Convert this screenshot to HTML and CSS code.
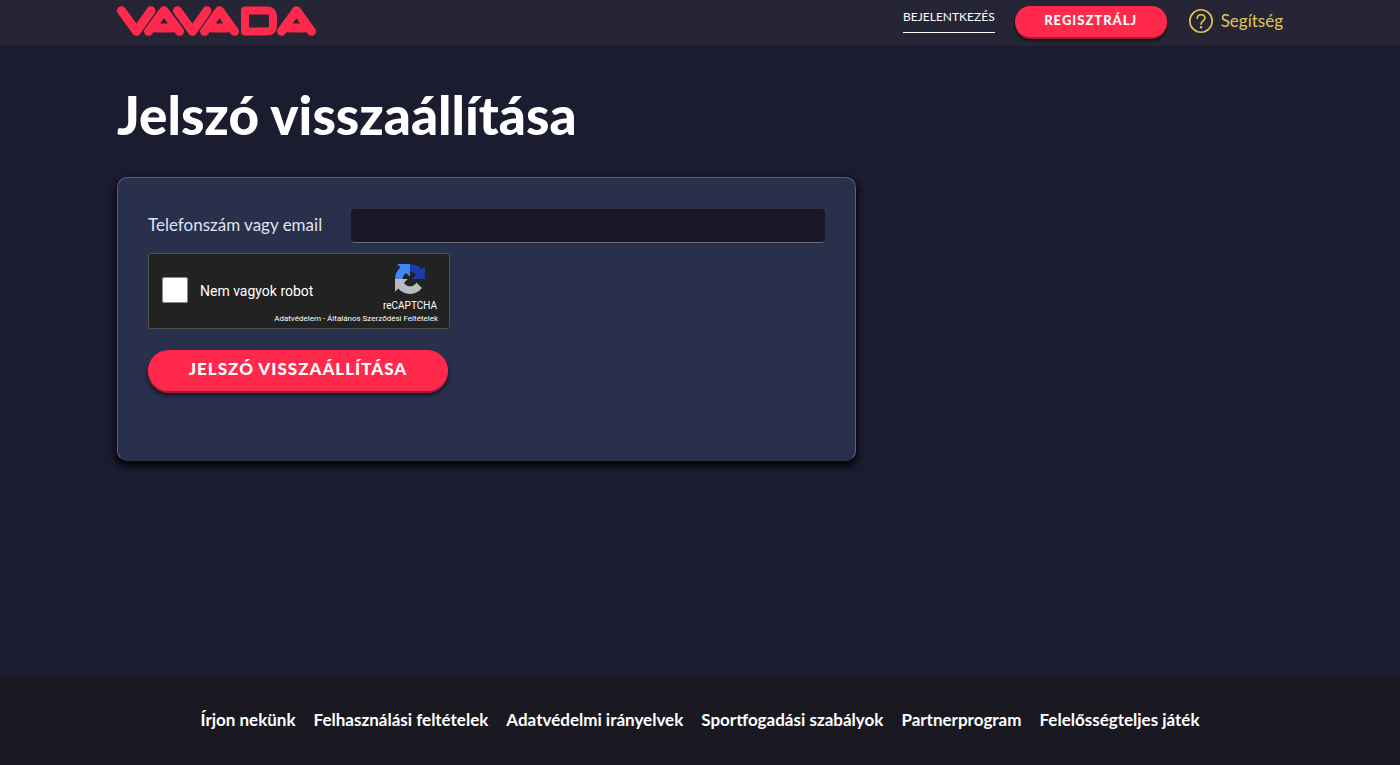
FILE: index.html
```html
<!DOCTYPE html>
<html lang="hu">
<head>
  <meta charset="UTF-8">
  <meta name="viewport" content="width=device-width, initial-scale=1.0">
  <title>Jelszó visszaállítása - Vavada</title>
  <link rel="stylesheet" href="styles.css">
</head>
<body>
  <header class="header">
    <div class="container header-inner">
      <a class="logo" href="#" aria-label="Vavada">
        <svg width="199" height="30" viewBox="0 0 199 30" fill="none" stroke-linecap="round" stroke-linejoin="round">
          <g stroke="#ff2a4b" stroke-width="9">
            <path d="M31.5 25.3L47 4.7L62.5 25.3M39 22H55"/>
            <path d="M87.5 25.3L102.500 4.7L117.500 25.3M95 22H110"/>
            <path d="M164.500 25.3L179.500 4.7L194.500 25.3M172 22H187"/>
            <path d="M128 4.5H150Q156 4.500 156 11V19Q156 25.500 150 25.500H128Z" stroke-width="8"/>
          </g>
          <path d="M4.500 4.700L19.500 25.300L34 4.700M60.500 4.700L75.500 25.300L90 4.700" stroke="#262535" stroke-width="11"/>
          <path d="M4.500 4.700L19.500 25.300L34 4.700M60.500 4.700L75.500 25.300L90 4.700" stroke="#ff2a4b" stroke-width="9"/>
        </svg>
      </a>
      <nav class="nav">
        <a class="login-link" href="#">BEJELENTKEZÉS</a>
        <button class="btn btn-small" type="button">REGISZTRÁLJ</button>
        <a class="help-link" href="#">
          <svg width="24" height="24" viewBox="0 0 24 24" fill="none" stroke="#e0c84e" stroke-width="1.6">
            <circle cx="12" cy="12" r="11.2"/>
            <path d="M8.2 9.5C8.2 7.2 9.8 5.8 12 5.8S15.9 7.2 15.9 9.300C15.9 11.8 12 12 12 15.3" stroke-linecap="round"/>
            <circle cx="12" cy="18.3" r="1.2" fill="#e0c84e" stroke="none"/>
          </svg>
          Segítség
        </a>
      </nav>
    </div>
  </header>

  <main class="container main">
    <h1>Jelszó visszaállítása</h1>

    <form class="card">
      <div class="form-row">
        <label for="login">Telefonszám vagy email</label>
        <input class="text-input" type="text" id="login" name="login">
      </div>

      <div class="captcha">
        <input class="captcha-check" type="checkbox" id="robot">
        <label class="captcha-label" for="robot">Nem vagyok robot</label>
        <div class="captcha-brand">
          <svg class="captcha-logo" width="30" height="30" viewBox="0 0 64 64">
            <path d="M64 31.955l-.033-1.370V4.687l-7.160 7.160C50.948 4.674 42.033.093 32.050.093c-10.400 0-19.622 4.960-25.458 12.640l11.736 11.860a15.550 15.550 0 0 1 4.754-5.334c2.050-1.600 4.952-2.906 8.968-2.906.485 0 .86.057 1.135.163 4.976.393 9.288 3.140 11.828 7.124l-8.307 8.307L64 31.953" fill="#1c3aa9"/>
            <path d="M31.862.094l-1.370.033H4.594l7.160 7.160C4.580 13.147 0 22.060 0 32.046c0 10.400 4.960 19.622 12.640 25.458L24.500 45.768a15.550 15.550 0 0 1-5.334-4.754c-1.600-2.050-2.906-4.952-2.906-8.968 0-.485.057-.86.163-1.135.393-4.976 3.140-9.288 7.124-11.828l8.307 8.307L31.860.095" fill="#4285f4"/>
            <path d="M.001 32.045l.033 1.370v25.898l7.160-7.160c5.860 7.173 14.774 11.754 24.760 11.754 10.400 0 19.622-4.960 25.458-12.640l-11.736-11.860a15.550 15.550 0 0 1-4.754 5.334c-2.050 1.600-4.952 2.906-8.968 2.906-.485 0-.86-.057-1.135-.163-4.976-.393-9.288-3.140-11.828-7.124l8.307-8.307L0 32.047" fill="#bababa"/>
          </svg>
          <span class="captcha-name">reCAPTCHA</span>
        </div>
        <div class="captcha-terms">
          <a href="#">Adatvédelem</a> - <a href="#">Általános Szerződési Feltételek</a>
        </div>
      </div>

      <button class="btn btn-large" type="submit">JELSZÓ VISSZAÁLLÍTÁSA</button>
    </form>
  </main>

  <footer class="footer">
    <nav class="footer-nav">
      <a href="#">Írjon nekünk</a>
      <a href="#">Felhasználási feltételek</a>
      <a href="#">Adatvédelmi irányelvek</a>
      <a href="#">Sportfogadási szabályok</a>
      <a href="#">Partnerprogram</a>
      <a href="#">Felelősségteljes játék</a>
    </nav>
  </footer>
</body>
</html>
```
FILE: styles.css
```css
* {
  box-sizing: border-box;
}

body {
  margin: 0;
  min-height: 100vh;
  display: flex;
  flex-direction: column;
  font-family: Lato, "Open Sans", sans-serif;
  font-size: 17px;
  color: #fff;
  background-color: #1b1c30;
}

a {
  color: inherit;
  text-decoration: none;
}

.container {
  width: 100%;
  max-width: 1206px;
  margin: 0 auto;
  padding: 0 20px;
}

/* header */
.header {
  background-color: #262535;
}

.header-inner {
  display: flex;
  justify-content: space-between;
  align-items: flex-start;
  min-height: 46px;
  padding-top: 6px;
}

.logo svg,
.help-link svg {
  display: block;
}

.nav {
  display: flex;
  align-items: flex-start;
  gap: 20px;
}

.login-link {
  padding: 2px 0 6px;
  font-size: 12px;
  line-height: 18px;
  border-bottom: 1px solid #fff;
}

.btn {
  border: 0;
  color: #fff;
  font-family: inherit;
  font-weight: 900;
  background-color: #ff294b;
  cursor: pointer;
}

.btn-small {
  width: 152px;
  height: 31px;
  padding: 0 0 4px;
  border-radius: 16px;
  font-size: 13px;
  letter-spacing: 1px;
  box-shadow: 0 2px 0 #a01d3a, 0 3px 3px #000;
}

.help-link {
  display: flex;
  align-items: center;
  gap: 8px;
  margin-left: 2px;
  padding-top: 3px;
  line-height: 24px;
  color: #e0c84e;
}

/* content */
.main {
  flex: 1;
}

h1 {
  margin: 38px 0 31px;
  font-size: 53px;
  line-height: 62px;
  font-weight: 900;
}

.card {
  max-width: 739px;
  min-height: 284px;
  padding: 31px 30px;
  border: 1px solid #56607f;
  border-bottom-color: #29304b;
  border-radius: 10px;
  background-color: #29304b;
  box-shadow: 0 4px 6px 2px #07070e;
}

.form-row {
  display: flex;
  align-items: center;
  justify-content: space-between;
  gap: 20px;
  color: #dfe3f0;
}

.form-row label {
  padding-bottom: 4px;
}

.text-input {
  flex: 0 1 474px;
  min-width: 0;
  height: 34px;
  padding: 0 12px;
  border: 1px solid #1a1828;
  border-bottom-color: #6b6c7c;
  border-radius: 4px;
  font: inherit;
  color: #fff;
  background-color: #1a1828;
}

.captcha {
  display: grid;
  grid-template-columns: 26px 1fr 56px;
  grid-template-rows: 50px 12px;
  column-gap: 12px;
  align-items: center;
  width: 302px;
  height: 76px;
  margin-top: 10px;
  padding: 9px 11px 0 13px;
  border: 1px solid #525252;
  border-radius: 3px;
  font-family: Roboto, sans-serif;
  background-color: #222;
}

.captcha-check {
  appearance: none;
  width: 26px;
  height: 26px;
  margin: 4px 0 0;
  border: 1px solid #8a8a8a;
  border-radius: 2px;
  background-color: #fff;
}

.captcha-check:checked {
  background-color: #4285f4;
}

.captcha-label {
  padding-top: 6px;
  font-size: 14px;
}

.captcha-brand {
  display: flex;
  flex-direction: column;
  align-items: center;
}

.captcha-name {
  font-size: 10px;
  line-height: 12px;
  margin-top: 6px;
}

.captcha-terms {
  grid-column: 1 / -1;
  text-align: right;
  font-size: 8px;
  line-height: 12px;
}

.btn-large {
  display: block;
  width: 300px;
  height: 41px;
  margin-top: 21px;
  padding: 0 0 4px;
  border-radius: 21px;
  font-size: 17px;
  letter-spacing: 1px;
  box-shadow: 0 2px 0 #a01d3a, 0 4px 4px #10101c;
}

/* footer */
.footer {
  padding: 33px 20px;
  background-color: #1a1921;
}

.footer-nav {
  display: flex;
  flex-wrap: wrap;
  justify-content: center;
  gap: 8px 18px;
  line-height: 24px;
  font-weight: 700;
}
```
